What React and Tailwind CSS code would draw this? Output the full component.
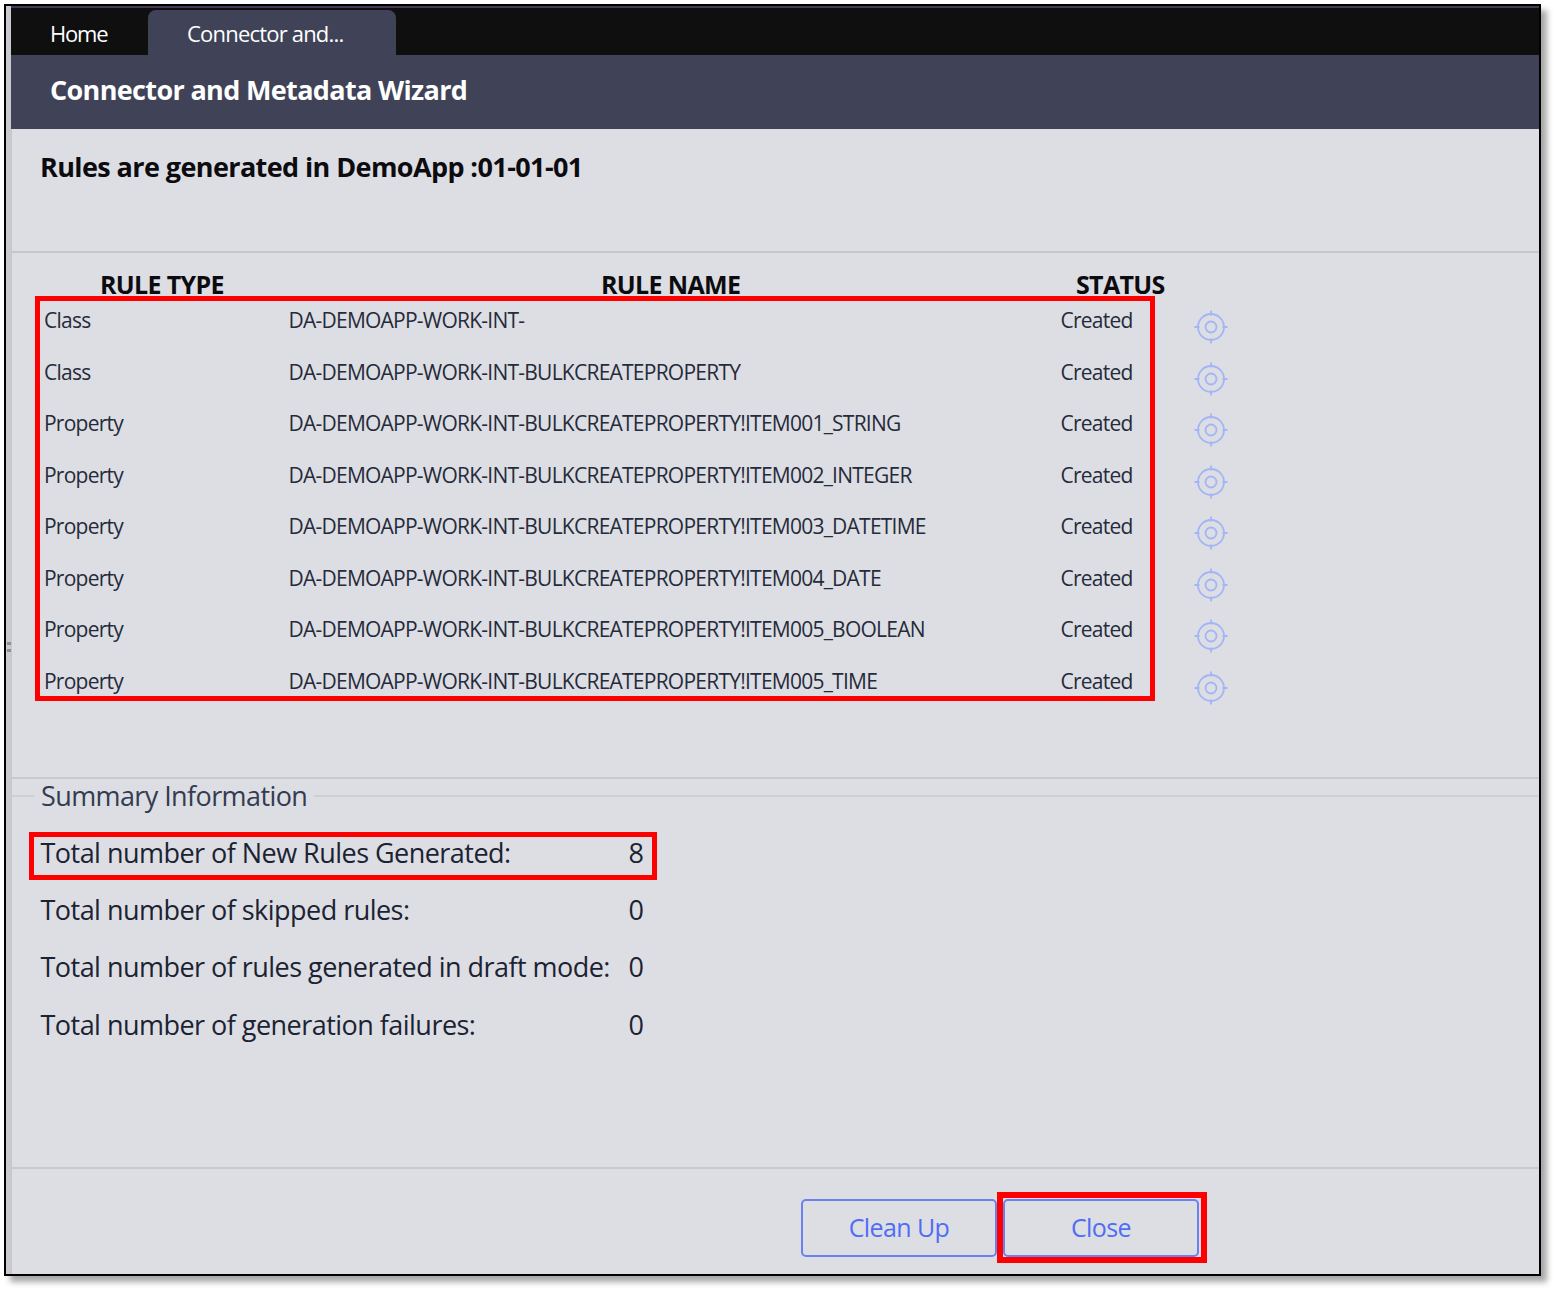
import React from 'react';

const rules = [
  ['Class', 'DA-DEMOAPP-WORK-INT-'],
  ['Class', 'DA-DEMOAPP-WORK-INT-BULKCREATEPROPERTY'],
  ['Property', 'DA-DEMOAPP-WORK-INT-BULKCREATEPROPERTY!ITEM001_STRING'],
  ['Property', 'DA-DEMOAPP-WORK-INT-BULKCREATEPROPERTY!ITEM002_INTEGER'],
  ['Property', 'DA-DEMOAPP-WORK-INT-BULKCREATEPROPERTY!ITEM003_DATETIME'],
  ['Property', 'DA-DEMOAPP-WORK-INT-BULKCREATEPROPERTY!ITEM004_DATE'],
  ['Property', 'DA-DEMOAPP-WORK-INT-BULKCREATEPROPERTY!ITEM005_BOOLEAN'],
  ['Property', 'DA-DEMOAPP-WORK-INT-BULKCREATEPROPERTY!ITEM005_TIME'],
];

function TargetIcon() {
  return (
    <svg width="34" height="34" viewBox="0 0 34 34" fill="none" stroke="#a3b5f5" strokeWidth="1.8">
      <circle cx="17" cy="17" r="13" />
      <circle cx="17" cy="17" r="5.5" />
      <path d="M17 0.5v5M17 28.5v5M0.5 17h5M28.5 17h5" />
    </svg>
  );
}

function SummaryRow({ label, value }) {
  return (
    <div className="flex h-[40px] items-center text-[27px] tracking-[-0.53px] text-[#1b2333]">
      <span className="w-[588px] whitespace-nowrap">{label}</span>
      <span>{value}</span>
    </div>
  );
}

export default function App() {
  return (
    <div className="h-[1289px] w-[1554px] bg-white pl-1 pt-1 font-['Open_Sans',sans-serif]">
      <div className="relative flex h-[1272px] w-[1537px] flex-col border-2 border-black bg-[#c9cacd] pl-[5px] shadow-[6px_6px_6px_rgba(0,0,0,0.35)]">
        {/* resize grip on the left edge */}
        <div className="absolute left-[1px] top-[636px] flex flex-col gap-[4px]">
          <div className="h-[3px] w-[4px] bg-[#8e8f94]" />
          <div className="h-[3px] w-[4px] bg-[#8e8f94]" />
        </div>

        <div className="flex h-[49px] shrink-0 items-end border-t-2 border-[#433b55] bg-[#0f0f10] text-white">
          <div className="flex h-[45px] w-[137px] items-center pl-[39px] pt-[1px] text-[22px] tracking-[-1.2px]">Home</div>
          <div className="flex h-[45px] w-[248px] items-center rounded-t-lg bg-[#404358] pl-[39px] pt-[2px] text-[22px] tracking-[-0.8px]">
            Connector and...
          </div>
        </div>
        <div className="flex h-[74px] shrink-0 items-center bg-[#404358] pb-[4px] pl-[39px] text-[27px] font-bold tracking-[-0.65px] text-white">
          Connector and Metadata Wizard
        </div>

        <div className="flex flex-1 flex-col border-l border-[#c6c7ca] bg-[#dddee3]">
          <div className="h-[124px] shrink-0 border-b-2 border-[#c6c7ca] pl-[28px] pt-[18px] text-[27px] font-bold leading-[40px] tracking-[-0.6px] text-[#0c0c10]">
            Rules are generated in DemoApp :01-01-01
          </div>

          <div className="flex h-[43px] shrink-0 items-end text-[25px] font-bold leading-[24px] tracking-[-0.65px] text-[#0c0c10]">
            <span className="ml-[88px] w-[501px]">RULE TYPE</span>
            <span className="w-[475px]">RULE NAME</span>
            <span>STATUS</span>
          </div>

          <div className="flex h-[483px] shrink-0 items-start border-b-2 border-[#c9cacd] pl-[23px]">
            <div className="flex h-[405px] w-[1120px] shrink-0 flex-col gap-[23.57px] border-[5px] border-[#ff0000] pl-[4px] pt-[5px] text-[21px] leading-[28px] tracking-[-0.76px] text-[#252b3a]">
              {rules.map((rule) => (
                <div key={rule[1]} className="flex">
                  <span className="w-[244.5px]">{rule[0]}</span>
                  <span className="w-[772px] whitespace-nowrap">{rule[1]}</span>
                  <span>Created</span>
                </div>
              ))}
            </div>
            <div className="ml-[39px] mt-[14px] flex flex-col gap-[17.57px]">
              {rules.map((rule) => (
                <TargetIcon key={rule[1]} />
              ))}
            </div>
          </div>

          <div className="flex h-[390px] shrink-0 flex-col border-b-2 border-[#c9cacd]">
            <div className="relative h-[36px] shrink-0">
              <div className="absolute left-0 right-0 top-[16px] border-t-2 border-[#cfd0d4]" />
              <span className="absolute left-[22px] top-0 bg-[#dddee3] px-[7px] text-[27px] leading-[34px] tracking-[-0.6px] text-[#333c50]">
                Summary Information
              </span>
            </div>
            <div className="mt-[17px] flex w-[660px] flex-col">
              <div className="ml-[17px] h-[48px] w-[628px] border-[5px] border-[#ff0000] pl-[6.5px]">
                <div className="-mt-[4px]">
                  <SummaryRow label="Total number of New Rules Generated:" value="8" />
                </div>
              </div>
              <div className="mt-[10px] flex flex-col gap-[17.4px] pl-[28.5px]">
                <SummaryRow label="Total number of skipped rules:" value="0" />
                <SummaryRow label="Total number of rules generated in draft mode:" value="0" />
                <SummaryRow label="Total number of generation failures:" value="0" />
              </div>
            </div>
          </div>

          <div className="flex flex-1 items-start pl-[789px] pt-[23px]">
            <button className="mt-[7px] flex h-[58px] w-[196px] items-center justify-center rounded-[5px] border-2 border-[#6a82f0] text-[25px] tracking-[-0.6px] text-[#4f6df5]">
              Clean Up
            </button>
            <div className="h-[71px] w-[210px] border-[6px] border-[#ff0000]">
              <button className="mt-[1px] flex h-[58px] w-[196px] items-center justify-center rounded-[5px] border-2 border-[#6a82f0] text-[25px] tracking-[-0.6px] text-[#4f6df5]">
                Close
              </button>
            </div>
          </div>
        </div>
      </div>
    </div>
  );
}
